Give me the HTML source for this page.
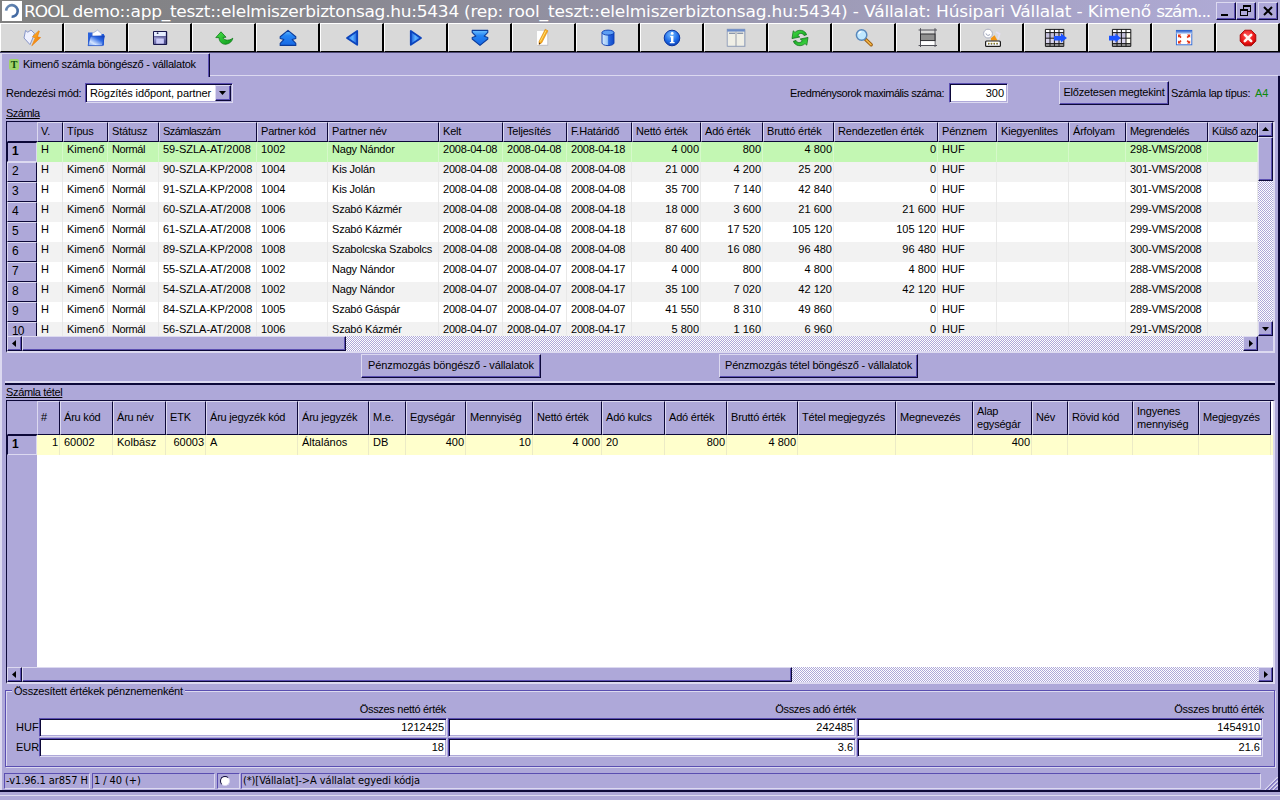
<!DOCTYPE html>
<html><head><meta charset="utf-8"><title>ROOL demo</title>
<style>
*{box-sizing:border-box;margin:0;padding:0}
html,body{width:1280px;height:800px;overflow:hidden}
body{background:#aea8d9;font-family:"Liberation Sans",sans-serif;font-size:11px;color:#000;position:relative}
.a{position:absolute;white-space:nowrap}
.t{position:absolute;white-space:nowrap;line-height:13px;height:13px}
.r{text-align:right}
.title{left:0;top:0;width:1280px;height:23px;background:linear-gradient(to right,#808080 0,#85858a 20%,#b1acd9 100%)}
.title .tx{left:24px;top:0;height:23px;line-height:22px;font-family:"DejaVu Sans","Liberation Sans",sans-serif;font-size:17px;color:#fff;letter-spacing:-0.27px;transform:scaleY(.945);transform-origin:0 16.9px}
.tb{top:23px;width:64px;height:29px;background:#d9d9d9;border-top:1px solid #fff;border-left:1px solid #fff;border-right:2px solid #000;border-bottom:1px solid #000;box-shadow:0 1px 0 #4a4670}
.raised{border:1px solid;border-color:#dcd9f0 #0c0838 #0c0838 #dcd9f0;background:#aea8d9}
.btn{border:1px solid;border-color:#dcd9f0 #0c0838 #0c0838 #dcd9f0;box-shadow:inset -1px -1px 0 #5a4eb1;background:#aea8d9;text-align:center}
.sunk{border:1px solid;border-color:#5a4eb1 #dcd9f0 #dcd9f0 #5a4eb1;box-shadow:inset 1px 1px 0 #0c0838,inset -1px -1px 0 #aea8d9;padding:1px;background:#fff}
.hc{top:0;border:1px solid;border-color:#dcd9f0 #0c0838 #0c0838 #dcd9f0;background:#aea8d9;padding-left:3px;overflow:hidden;letter-spacing:-0.2px}
.rh{left:0;width:30px;height:20px;border:1px solid;border-color:#dcd9f0 #0c0838 #0c0838 #dcd9f0;background:#aea8d9;padding-left:4px;font-size:12px;line-height:17px;letter-spacing:-1px}
.row{left:30px;height:20px}
.c{top:0;height:20px;line-height:14px;padding:0 1px 0 4px;border-right:1px solid #e8e8e8;overflow:hidden}
.dith{background-image:conic-gradient(#fff 25%,#aea8d9 0 50%,#fff 0 75%,#aea8d9 0);background-size:2px 2px}
.sb{border:1px solid;border-color:#dcd9f0 #0c0838 #0c0838 #dcd9f0;box-shadow:inset -1px -1px 0 #5a4eb1;background:#aea8d9}
.u{text-decoration:underline}
</style></head><body>

<div class="a title"><div class="a" style="left:2px;top:1px;width:20px;height:20px;background:#fff"><svg width="20" height="20" viewBox="0 0 20 20"><defs><linearGradient id="gsw" x1="0" y1="0" x2="1" y2="1"><stop offset="0" stop-color="#6c8cb4"/><stop offset="1" stop-color="#3c64a0"/></linearGradient></defs><path d="M4.1 9.6 A5.8 5.8 0 1 1 9.6 15.7" fill="none" stroke="url(#gsw)" stroke-width="2.6"/></svg></div>
<div class="a tx"><span style="letter-spacing:-1px">ROOL </span>demo::app_teszt::elelmiszerbiztonsag.hu:5434 (rep: <span style="letter-spacing:-0.15px">rool_teszt::elelmiszerbiztonsag.hu:5434) - Vállalat: Húsipari Vállalat - Kimenő </span><span style="letter-spacing:-1px">szám...</span></div>
<div class="a btn" style="left:1216px;top:2px;width:20px;height:18px">
<div class="a" style="left:4px;top:11px;width:7px;height:2px;background:#000"></div>
</div>
<div class="a btn" style="left:1236px;top:2px;width:20px;height:18px">
<div class="a" style="left:6px;top:2px;width:8px;height:7px;border:1px solid #000;border-top-width:2px"></div><div class="a" style="left:3px;top:6px;width:8px;height:7px;border:1px solid #000;border-top-width:2px;background:#aea8d9"></div>
</div>
<div class="a btn" style="left:1258px;top:2px;width:20px;height:18px">
<svg class="a" style="left:4px;top:3px" width="10" height="10" viewBox="0 0 10 10"><path d="M1 1 L9 9 M9 1 L1 9" stroke="#000" stroke-width="2"/></svg>
</div>
</div>
<svg width="0" height="0" style="position:absolute"><defs>
<linearGradient id="gbv" x1="0" y1="0" x2="0" y2="1"><stop offset="0" stop-color="#6cc0ff"/><stop offset=".35" stop-color="#2484f4"/><stop offset="1" stop-color="#1668e4"/></linearGradient>
<linearGradient id="gbh" x1="0" y1="0" x2="1" y2="0"><stop offset="0" stop-color="#2c80f0"/><stop offset=".55" stop-color="#5cb0ff"/><stop offset="1" stop-color="#1458d8"/></linearGradient>
<linearGradient id="gbh2" x1="0" y1="0" x2="1" y2="0"><stop offset="0" stop-color="#1458d8"/><stop offset=".45" stop-color="#5cb0ff"/><stop offset="1" stop-color="#2c80f0"/></linearGradient>
<linearGradient id="gcyl" x1="0" y1="0" x2="1" y2="0"><stop offset="0" stop-color="#d8ecff"/><stop offset=".45" stop-color="#9cc8f8"/><stop offset=".55" stop-color="#2a6ae0"/><stop offset="1" stop-color="#0f48c8"/></linearGradient>
<linearGradient id="gfl" x1="1" y1="0" x2="0" y2="1"><stop offset="0" stop-color="#0c38b8"/><stop offset=".35" stop-color="#2e6ae4"/><stop offset=".72" stop-color="#d4e4ff"/><stop offset="1" stop-color="#6c9cf0"/></linearGradient>
<linearGradient id="gor" x1="0" y1="0" x2="1" y2="1"><stop offset="0" stop-color="#ffc030"/><stop offset="1" stop-color="#f06800"/></linearGradient>
<linearGradient id="gfd" x1="0" y1="0" x2="0.4" y2="1"><stop offset="0" stop-color="#d8dcf8"/><stop offset=".5" stop-color="#9c9cd0"/><stop offset="1" stop-color="#50508c"/></linearGradient>
<radialGradient id="ginf" cx=".45" cy=".3" r=".75"><stop offset="0" stop-color="#7cc0ff"/><stop offset=".6" stop-color="#1c6ae8"/><stop offset="1" stop-color="#0838a8"/></radialGradient>
<radialGradient id="gred" cx=".45" cy=".35" r=".7"><stop offset="0" stop-color="#ff5a5a"/><stop offset=".7" stop-color="#e81010"/><stop offset="1" stop-color="#b00000"/></radialGradient>
<linearGradient id="ggr" x1="0" y1="0" x2="1" y2="1"><stop offset="0" stop-color="#48e048"/><stop offset="1" stop-color="#0c9a1c"/></linearGradient>
<linearGradient id="gtb" x1="0" y1="0" x2="0" y2="1"><stop offset="0" stop-color="#1c54c8"/><stop offset="1" stop-color="#bcd4f8"/></linearGradient>
</defs></svg>
<div class="a tb" style="left:0px"><svg class="a" style="left:-1px;top:-2px" width="64" height="31" viewBox="0 0 64 31"><path d="M24 16 L25.5 8.5 L27.8 10.2 L31 8 L34.4 11.4 L33 15.5 L30 22.6 Z" fill="#eef0ff" stroke="#7c8cc4" stroke-width=".9" stroke-linejoin="round"/><path d="M38.8 8.8 L32.4 14.8 L35.4 15.8 L31.8 23.8 L40.6 15.6 L37.4 14.8 L39.4 9.2 Z" fill="url(#gor)" stroke="#e87800" stroke-width=".6" stroke-linejoin="round"/></svg></div>
<div class="a tb" style="left:64px"><svg class="a" style="left:-1px;top:-2px" width="64" height="31" viewBox="0 0 64 31"><path d="M24 10.5 h4.5 l1 1.5 h10.5 v11.5 h-16 z" fill="#2a62dc"/><path d="M28.4 14.4 V11.4 L33.6 8.2 L37.4 11.6 V14.4 Z" fill="#fff" stroke="#94a8dc" stroke-width=".7" stroke-linejoin="round"/><path d="M26.5 14.2 L40.6 13.8 L38.4 23.6 L24 23.6 Z" fill="url(#gfl)" stroke="#1444c0" stroke-width=".6" stroke-linejoin="round"/></svg></div>
<div class="a tb" style="left:128px"><svg class="a" style="left:-1px;top:-2px" width="64" height="31" viewBox="0 0 64 31"><rect x="25" y="9" width="14.2" height="14" rx="1" fill="#16164a"/><rect x="26" y="10" width="12" height="12" fill="url(#gfd)"/><rect x="26.2" y="10" width="11.4" height="4" fill="#e6eeff"/><circle cx="29.6" cy="11.2" r=".9" fill="#30305c"/><rect x="26" y="14.3" width="12" height="1" fill="#50508c"/><rect x="28" y="16.6" width="8" height="5" fill="#b8b8f0"/><path d="M30 16.6v5M32 16.6v5M34 16.6v5" stroke="#e8e8ff" stroke-width=".8"/></svg></div>
<div class="a tb" style="left:192px"><svg class="a" style="left:-1px;top:-2px" width="64" height="31" viewBox="0 0 64 31"><path d="M29 9.8 L23.8 15.6 L27 15.6 C27.2 20.2 30.6 22.6 34 22.2 C37.6 21.8 40 19.6 40.8 16.2 C38.6 18 36 18.4 34.2 18 C32.4 17.6 31.2 16.8 31.2 15.4 L34 15.2 Z" fill="url(#ggr)" stroke="#0a7a14" stroke-width=".8" stroke-linejoin="round"/></svg></div>
<div class="a tb" style="left:256px"><svg class="a" style="left:-1px;top:-2px" width="64" height="31" viewBox="0 0 64 31"><path d="M32 8.4 L39.8 14.8 V16.4 L36.2 17.6 L39.8 21.4 V23.4 H24.2 V21.4 L27.8 17.6 L24.2 16.4 V14.8 Z" fill="url(#gbv)" stroke="#0a3c9c" stroke-width="1.1" stroke-linejoin="round"/></svg></div>
<div class="a tb" style="left:320px"><svg class="a" style="left:-1px;top:-2px" width="64" height="31" viewBox="0 0 64 31"><path d="M27 16 L37.2 9 V22.8 Z" fill="url(#gbh)" stroke="#0c44bc" stroke-width="1.8" stroke-linejoin="round"/></svg></div>
<div class="a tb" style="left:384px"><svg class="a" style="left:-1px;top:-2px" width="64" height="31" viewBox="0 0 64 31"><path d="M37 16 L26.8 9 V22.8 Z" fill="url(#gbh2)" stroke="#0c44bc" stroke-width="1.8" stroke-linejoin="round"/></svg></div>
<div class="a tb" style="left:448px"><svg class="a" style="left:-1px;top:-2px" width="64" height="31" viewBox="0 0 64 31"><path d="M32 23.4 L24.2 17 V15.4 L27.8 14.2 L24.2 10.4 V8.4 H39.8 V10.4 L36.2 14.2 L39.8 15.4 V17 Z" fill="url(#gbv)" stroke="#0a3c9c" stroke-width="1.1" stroke-linejoin="round"/></svg></div>
<div class="a tb" style="left:512px"><svg class="a" style="left:-1px;top:-2px" width="64" height="31" viewBox="0 0 64 31"><rect x="25.6" y="9.6" width="10.6" height="14" fill="#b8b8c0"/><rect x="25" y="9" width="10.4" height="13.8" fill="#fff"/><path d="M33.2 7.2 L36 8.8 L29.8 20.8 L27 22.4 L27 19.4 Z" fill="#f4a820" stroke="#d88000" stroke-width=".5" stroke-linejoin="round"/><path d="M34 8.6 L28.2 19.6" stroke="#ffe070" stroke-width="1"/><path d="M27 20.4 L28.6 21.4 L27 22.4 Z" fill="#40281c"/></svg></div>
<div class="a tb" style="left:576px"><svg class="a" style="left:-1px;top:-2px" width="64" height="31" viewBox="0 0 64 31"><path d="M26 10.6 V21 A6 2.6 0 0 0 38 21 V10.6 Z" fill="url(#gcyl)" stroke="#0c3cb0" stroke-width=".9"/><ellipse cx="32" cy="10.6" rx="6" ry="2.5" fill="#5c9ef4" stroke="#0c3cb0" stroke-width=".9"/></svg></div>
<div class="a tb" style="left:640px"><svg class="a" style="left:-1px;top:-2px" width="64" height="31" viewBox="0 0 64 31"><circle cx="32" cy="16" r="7.8" fill="url(#ginf)" stroke="#0a34a0" stroke-width="1"/><circle cx="32.2" cy="11.4" r="1.4" fill="#fff"/><path d="M30.2 14 H33.4 V20 H34.6 V21.2 H29.8 V20 H31 V15.2 H30.2 Z" fill="#fff"/></svg></div>
<div class="a tb" style="left:704px"><svg class="a" style="left:-1px;top:-2px" width="64" height="31" viewBox="0 0 64 31"><rect x="23.8" y="7.8" width="17.6" height="17" fill="#b4b8c4"/><rect x="23.2" y="7.2" width="17.6" height="17" fill="#f0efe6" stroke="#8494b4" stroke-width=".8"/><rect x="23.2" y="7.2" width="17.6" height="2.4" fill="#6c8cc8"/><rect x="25" y="10.6" width="6" height="1.4" fill="#8c98ac"/><rect x="33.2" y="10.6" width="6" height="1.4" fill="#8c98ac"/><path d="M32 9.6 V24.2" stroke="#8c94a4" stroke-width=".9"/></svg></div>
<div class="a tb" style="left:768px"><svg class="a" style="left:-1px;top:-2px" width="64" height="31" viewBox="0 0 64 31"><path d="M38.6 12.8 C37.4 8 30.4 6.8 27 10.4 L25.2 8.8 L24 16.6 L31.8 15 L29.8 13.2 C31.6 10.6 35 11 36 13.6 Z" fill="url(#ggr)" stroke="#0c6c18" stroke-width=".7" stroke-linejoin="round"/><path d="M38.6 12.8 C37.4 8 30.4 6.8 27 10.4 L25.2 8.8 L24 16.6 L31.8 15 L29.8 13.2 C31.6 10.6 35 11 36 13.6 Z" fill="url(#ggr)" stroke="#0c6c18" stroke-width=".7" stroke-linejoin="round" transform="rotate(180 32 16)"/></svg></div>
<div class="a tb" style="left:832px"><svg class="a" style="left:-1px;top:-2px" width="64" height="31" viewBox="0 0 64 31"><path d="M33.4 17.2 L39.2 22.8" stroke="#9c5c10" stroke-width="3.4" stroke-linecap="round"/><path d="M34.2 18 L39 22.6" stroke="#f4b848" stroke-width="1.6" stroke-linecap="round"/><circle cx="29.6" cy="13" r="5.2" fill="#c0e8ff" stroke="#5888bc" stroke-width="1.5"/><path d="M26.6 12 A3.4 3.4 0 0 1 29.4 9.6" stroke="#fff" stroke-width="1.1" fill="none"/></svg></div>
<div class="a tb" style="left:896px"><svg class="a" style="left:-1px;top:-2px" width="64" height="31" viewBox="0 0 64 31"><path d="M22.6 8H41M22.6 23.5H41M24.5 6.2V25M39 6.2V25" stroke="#505058" stroke-width="1"/><rect x="24.5" y="12" width="14.5" height="6.6" fill="#909090" stroke="#2c2c30" stroke-width="1"/><rect x="25" y="19.2" width="13.5" height="3.8" fill="#fff"/></svg></div>
<div class="a tb" style="left:960px"><svg class="a" style="left:-1px;top:-2px" width="64" height="31" viewBox="0 0 64 31"><circle cx="28" cy="11.6" r="4.4" fill="#fff" stroke="#a4a8bc" stroke-width=".9"/><path d="M26 11.4 A2.2 2.2 0 0 0 30 12.4" stroke="#9098b0" stroke-width=".9" fill="none"/><path d="M30.8 16.2 L34.6 13.2 L37.4 18.6 H31 Z" fill="#f49410"/><path d="M36 10 L39.6 12 L38 17" stroke="#e4e0f4" stroke-width="1.6" fill="none"/><rect x="25.6" y="19" width="14.8" height="5.4" rx="1" fill="#fff" stroke="#1c1c1c" stroke-width="1.2"/><path d="M28 21.8h1.4M30.8 21.8h1.4M33.6 21.8h1.4M36.4 21.8h1.4" stroke="#30302c" stroke-width="1.6"/><path d="M28 21.2h1.4M30.8 21.2h1.4M33.6 21.2h1.4M36.4 21.2h1.4" stroke="#d8c020" stroke-width=".8"/></svg></div>
<div class="a tb" style="left:1024px"><svg class="a" style="left:-1px;top:-2px" width="64" height="31" viewBox="0 0 64 31"><rect x="21.4" y="7.4" width="18.4" height="17" fill="#c4c0dc"/><rect x="21.4" y="7.4" width="18.4" height="3" fill="#fff"/><rect x="21.4" y="16.4" width="18.4" height="5" fill="#d8d4ec"/><rect x="21.4" y="21.6" width="18.4" height="2.6" fill="#989898"/><path d="M21.4 7.4V24.4M26.0 7.4V24.4M30.4 7.4V24.4M35.0 7.4V24.4M39.8 7.4V24.4M21.4 7.4H39.8M21.4 10.6H39.8M21.4 16.2H39.8M21.4 21.6H39.8M21.4 24.4H39.8" stroke="#181818" stroke-width="1"/><path d="M30 14 H37 V11.6 L43 16 L37 20.6 V18.4 H30 Z" fill="#1c54ff"/></svg></div>
<div class="a tb" style="left:1088px"><svg class="a" style="left:-1px;top:-2px" width="64" height="31" viewBox="0 0 64 31"><rect x="24.4" y="7.4" width="18.4" height="17" fill="#c4c0dc"/><rect x="24.4" y="7.4" width="18.4" height="3" fill="#fff"/><rect x="24.4" y="16.4" width="18.4" height="5" fill="#d8d4ec"/><rect x="24.4" y="21.6" width="18.4" height="2.6" fill="#989898"/><rect x="38.0" y="10.4" width="4.8" height="11.2" fill="#fffff4"/><path d="M24.4 7.4V24.4M29.0 7.4V24.4M33.4 7.4V24.4M38.0 7.4V24.4M42.8 7.4V24.4M24.4 7.4H42.8M24.4 10.6H42.8M24.4 16.2H42.8M24.4 21.6H42.8M24.4 24.4H42.8" stroke="#181818" stroke-width="1"/><path d="M21 13.8 H27.4 V11.6 L32.6 16 L27.4 20.6 V18.6 H21 Z" fill="#1c54ff"/></svg></div>
<div class="a tb" style="left:1152px"><svg class="a" style="left:-1px;top:-2px" width="64" height="31" viewBox="0 0 64 31"><rect x="24.4" y="8.4" width="15.4" height="14.4" fill="#fff" stroke="#2c68d8" stroke-width=".9"/><rect x="24.4" y="8.4" width="15.4" height="3.4" fill="url(#gtb)"/><path d="M26 12.6h3.2l-1 1 1.4 1.4-1.2 1.2-1.4-1.4-1 1zM38.2 12.6v3.2l-1-1-1.4 1.4-1.2-1.2 1.4-1.4-1-1zM26 21.6v-3.2l1 1 1.4-1.4 1.2 1.2-1.4 1.4 1 1zM38.2 21.6h-3.2l1-1-1.4-1.4 1.2-1.2 1.4 1.4 1-1z" fill="#e43414"/></svg></div>
<div class="a tb" style="left:1216px"><svg class="a" style="left:-1px;top:-2px" width="64" height="31" viewBox="0 0 64 31"><path d="M28.8 8.2 H35.2 L39.8 12.8 V19.2 L35.2 23.8 H28.8 L24.2 19.2 V12.8 Z" fill="url(#gred)" stroke="#a40404" stroke-width=".9" stroke-linejoin="round"/><path d="M28.8 12.8 L35.2 19.2 M35.2 12.8 L28.8 19.2" stroke="#fff4f0" stroke-width="2.6" stroke-linecap="round"/></svg></div>
<div class="a" style="left:1px;top:53px;width:209px;height:24px;border-top:1px solid #dcd9f0;border-right:1px solid #0c0838;box-shadow:inset -1px 0 0 #5a4eb1;background:#aea8d9"></div>
<div class="a" style="left:210px;top:75px;width:1068px;height:1px;background:#dcd9f0"></div>
<div class="a" style="left:9px;top:59px;width:10px;height:11px;background:#9fd36a;border-radius:2px;font:bold 10px 'Liberation Serif',serif;line-height:11px;text-align:center;color:#0a4a0a">T</div>
<div class="t" style="left:23px;top:58px;letter-spacing:-0.25px">Kimenő számla böngésző - vállalatok</div>
<div class="t" style="left:6px;top:87px;letter-spacing:-0.3px">Rendezési mód:</div>
<div class="a sunk" style="left:85px;top:83px;width:148px;height:20px"><div class="t" style="left:4px;top:3px;letter-spacing:-0.1px">Rögzítés időpont, partner</div><div class="a btn" style="right:1px;top:1px;width:16px;height:16px"><svg class="a" style="left:3px;top:5px" width="7" height="4"><path d="M0 0h7L3.5 4z" fill="#000"/></svg></div></div>
<div class="t" style="left:790px;top:87px;letter-spacing:-0.45px">Eredménysorok maximális száma:</div>
<div class="a sunk" style="left:949px;top:83px;width:59px;height:20px"><div class="t r" style="right:3px;top:3px">300</div></div>
<div class="a btn" style="left:1059px;top:81px;width:110px;height:24px;line-height:21px;letter-spacing:-0.2px">Előzetesen megtekint</div>
<div class="t" style="left:1171px;top:87px;letter-spacing:-0.3px">Számla lap típus:</div>
<div class="t" style="left:1255px;top:87px;color:#0a8a0a">A4</div>
<div class="t u" style="left:6px;top:107px;letter-spacing:-0.5px">Számla</div>
<div class="a" style="left:6px;top:121px;width:1269px;height:232px;border-width:1px 2px 2px 1px;border-style:solid;border-color:#0c0838;border-right-color:#dcd9f0;border-bottom-color:#dcd9f0;background:#fff;overflow:hidden">
<div class="a" style="left:0;top:0;width:1251px;height:214px;overflow:hidden">
<div class="a hc" style="left:0;width:31px;height:20px;border-color:#aea8d9 #aea8d9 #0c0838 #aea8d9;border-right-width:0"></div>
<div class="a hc" style="left:30px;width:26px;height:20px;line-height:17px">V.</div>
<div class="a hc" style="left:56px;width:45px;height:20px;line-height:17px">Típus</div>
<div class="a hc" style="left:101px;width:51px;height:20px;line-height:17px">Státusz</div>
<div class="a hc" style="left:152px;width:98px;height:20px;line-height:17px;letter-spacing:-0.55px">Számlaszám</div>
<div class="a hc" style="left:250px;width:71px;height:20px;line-height:17px">Partner kód</div>
<div class="a hc" style="left:321px;width:111px;height:20px;line-height:17px">Partner név</div>
<div class="a hc" style="left:432px;width:64px;height:20px;line-height:17px">Kelt</div>
<div class="a hc" style="left:496px;width:64px;height:20px;line-height:17px">Teljesítés</div>
<div class="a hc" style="left:560px;width:65px;height:20px;line-height:17px">F.Határidő</div>
<div class="a hc" style="left:625px;width:69px;height:20px;line-height:17px">Nettó érték</div>
<div class="a hc" style="left:694px;width:62px;height:20px;line-height:17px">Adó érték</div>
<div class="a hc" style="left:756px;width:71px;height:20px;line-height:17px">Bruttó érték</div>
<div class="a hc" style="left:827px;width:104px;height:20px;line-height:17px">Rendezetlen érték</div>
<div class="a hc" style="left:931px;width:59px;height:20px;line-height:17px">Pénznem</div>
<div class="a hc" style="left:990px;width:72px;height:20px;line-height:17px">Kiegyenlites</div>
<div class="a hc" style="left:1062px;width:57px;height:20px;line-height:17px">Árfolyam</div>
<div class="a hc" style="left:1119px;width:82px;height:20px;line-height:17px;letter-spacing:-0.4px">Megrendelés</div>
<div class="a hc" style="left:1201px;width:50px;height:20px;line-height:17px;letter-spacing:-0.4px">Külső azo</div>
<div class="a rh" style="top:20px;font-weight:bold;border-color:#0c0838 #dcd9f0 #dcd9f0 #0c0838">1</div>
<div class="a row" style="top:20px;width:1221px;background:#c3f7b3">
<div class="a c" style="left:0px;width:26px;border-right-color:#d6f9ca">H</div>
<div class="a c" style="left:26px;width:45px;border-right-color:#d6f9ca">Kimenő</div>
<div class="a c" style="left:71px;width:51px;letter-spacing:-0.4px;border-right-color:#d6f9ca">Normál</div>
<div class="a c" style="left:122px;width:98px;border-right-color:#d6f9ca">59-SZLA-AT/2008</div>
<div class="a c" style="left:220px;width:71px;border-right-color:#d6f9ca">1002</div>
<div class="a c" style="left:291px;width:111px;letter-spacing:-0.2px;border-right-color:#d6f9ca">Nagy Nándor</div>
<div class="a c" style="left:402px;width:64px;letter-spacing:-0.2px;border-right-color:#d6f9ca">2008-04-08</div>
<div class="a c" style="left:466px;width:64px;letter-spacing:-0.2px;border-right-color:#d6f9ca">2008-04-08</div>
<div class="a c" style="left:530px;width:65px;letter-spacing:-0.2px;border-right-color:#d6f9ca">2008-04-18</div>
<div class="a c r" style="left:595px;width:69px;border-right-color:#d6f9ca">4 000</div>
<div class="a c r" style="left:664px;width:62px;border-right-color:#d6f9ca">800</div>
<div class="a c r" style="left:726px;width:71px;border-right-color:#d6f9ca">4 800</div>
<div class="a c r" style="left:797px;width:104px;border-right-color:#d6f9ca">0</div>
<div class="a c" style="left:901px;width:59px;border-right-color:#d6f9ca">HUF</div>
<div class="a c" style="left:960px;width:72px;border-right-color:#d6f9ca"></div>
<div class="a c" style="left:1032px;width:57px;border-right-color:#d6f9ca"></div>
<div class="a c" style="left:1089px;width:82px;letter-spacing:-0.15px;border-right-color:#d6f9ca">298-VMS/2008</div>
<div class="a c" style="left:1171px;width:50px;border-right-color:#d6f9ca"></div>
</div>
<div class="a rh" style="top:40px">2</div>
<div class="a row" style="top:40px;width:1221px;background:#f2f2f2">
<div class="a c" style="left:0px;width:26px">H</div>
<div class="a c" style="left:26px;width:45px">Kimenő</div>
<div class="a c" style="left:71px;width:51px;letter-spacing:-0.4px">Normál</div>
<div class="a c" style="left:122px;width:98px">90-SZLA-KP/2008</div>
<div class="a c" style="left:220px;width:71px">1004</div>
<div class="a c" style="left:291px;width:111px;letter-spacing:-0.2px">Kis Jolán</div>
<div class="a c" style="left:402px;width:64px;letter-spacing:-0.2px">2008-04-08</div>
<div class="a c" style="left:466px;width:64px;letter-spacing:-0.2px">2008-04-08</div>
<div class="a c" style="left:530px;width:65px;letter-spacing:-0.2px">2008-04-08</div>
<div class="a c r" style="left:595px;width:69px">21 000</div>
<div class="a c r" style="left:664px;width:62px">4 200</div>
<div class="a c r" style="left:726px;width:71px">25 200</div>
<div class="a c r" style="left:797px;width:104px">0</div>
<div class="a c" style="left:901px;width:59px">HUF</div>
<div class="a c" style="left:960px;width:72px"></div>
<div class="a c" style="left:1032px;width:57px"></div>
<div class="a c" style="left:1089px;width:82px;letter-spacing:-0.15px">301-VMS/2008</div>
<div class="a c" style="left:1171px;width:50px"></div>
</div>
<div class="a rh" style="top:60px">3</div>
<div class="a row" style="top:60px;width:1221px;background:#fff">
<div class="a c" style="left:0px;width:26px">H</div>
<div class="a c" style="left:26px;width:45px">Kimenő</div>
<div class="a c" style="left:71px;width:51px;letter-spacing:-0.4px">Normál</div>
<div class="a c" style="left:122px;width:98px">91-SZLA-KP/2008</div>
<div class="a c" style="left:220px;width:71px">1004</div>
<div class="a c" style="left:291px;width:111px;letter-spacing:-0.2px">Kis Jolán</div>
<div class="a c" style="left:402px;width:64px;letter-spacing:-0.2px">2008-04-08</div>
<div class="a c" style="left:466px;width:64px;letter-spacing:-0.2px">2008-04-08</div>
<div class="a c" style="left:530px;width:65px;letter-spacing:-0.2px">2008-04-08</div>
<div class="a c r" style="left:595px;width:69px">35 700</div>
<div class="a c r" style="left:664px;width:62px">7 140</div>
<div class="a c r" style="left:726px;width:71px">42 840</div>
<div class="a c r" style="left:797px;width:104px">0</div>
<div class="a c" style="left:901px;width:59px">HUF</div>
<div class="a c" style="left:960px;width:72px"></div>
<div class="a c" style="left:1032px;width:57px"></div>
<div class="a c" style="left:1089px;width:82px;letter-spacing:-0.15px">301-VMS/2008</div>
<div class="a c" style="left:1171px;width:50px"></div>
</div>
<div class="a rh" style="top:80px">4</div>
<div class="a row" style="top:80px;width:1221px;background:#f2f2f2">
<div class="a c" style="left:0px;width:26px">H</div>
<div class="a c" style="left:26px;width:45px">Kimenő</div>
<div class="a c" style="left:71px;width:51px;letter-spacing:-0.4px">Normál</div>
<div class="a c" style="left:122px;width:98px">60-SZLA-AT/2008</div>
<div class="a c" style="left:220px;width:71px">1006</div>
<div class="a c" style="left:291px;width:111px;letter-spacing:-0.2px">Szabó Kázmér</div>
<div class="a c" style="left:402px;width:64px;letter-spacing:-0.2px">2008-04-08</div>
<div class="a c" style="left:466px;width:64px;letter-spacing:-0.2px">2008-04-08</div>
<div class="a c" style="left:530px;width:65px;letter-spacing:-0.2px">2008-04-18</div>
<div class="a c r" style="left:595px;width:69px">18 000</div>
<div class="a c r" style="left:664px;width:62px">3 600</div>
<div class="a c r" style="left:726px;width:71px">21 600</div>
<div class="a c r" style="left:797px;width:104px">21 600</div>
<div class="a c" style="left:901px;width:59px">HUF</div>
<div class="a c" style="left:960px;width:72px"></div>
<div class="a c" style="left:1032px;width:57px"></div>
<div class="a c" style="left:1089px;width:82px;letter-spacing:-0.15px">299-VMS/2008</div>
<div class="a c" style="left:1171px;width:50px"></div>
</div>
<div class="a rh" style="top:100px">5</div>
<div class="a row" style="top:100px;width:1221px;background:#fff">
<div class="a c" style="left:0px;width:26px">H</div>
<div class="a c" style="left:26px;width:45px">Kimenő</div>
<div class="a c" style="left:71px;width:51px;letter-spacing:-0.4px">Normál</div>
<div class="a c" style="left:122px;width:98px">61-SZLA-AT/2008</div>
<div class="a c" style="left:220px;width:71px">1006</div>
<div class="a c" style="left:291px;width:111px;letter-spacing:-0.2px">Szabó Kázmér</div>
<div class="a c" style="left:402px;width:64px;letter-spacing:-0.2px">2008-04-08</div>
<div class="a c" style="left:466px;width:64px;letter-spacing:-0.2px">2008-04-08</div>
<div class="a c" style="left:530px;width:65px;letter-spacing:-0.2px">2008-04-18</div>
<div class="a c r" style="left:595px;width:69px">87 600</div>
<div class="a c r" style="left:664px;width:62px">17 520</div>
<div class="a c r" style="left:726px;width:71px">105 120</div>
<div class="a c r" style="left:797px;width:104px">105 120</div>
<div class="a c" style="left:901px;width:59px">HUF</div>
<div class="a c" style="left:960px;width:72px"></div>
<div class="a c" style="left:1032px;width:57px"></div>
<div class="a c" style="left:1089px;width:82px;letter-spacing:-0.15px">299-VMS/2008</div>
<div class="a c" style="left:1171px;width:50px"></div>
</div>
<div class="a rh" style="top:120px">6</div>
<div class="a row" style="top:120px;width:1221px;background:#f2f2f2">
<div class="a c" style="left:0px;width:26px">H</div>
<div class="a c" style="left:26px;width:45px">Kimenő</div>
<div class="a c" style="left:71px;width:51px;letter-spacing:-0.4px">Normál</div>
<div class="a c" style="left:122px;width:98px">89-SZLA-KP/2008</div>
<div class="a c" style="left:220px;width:71px">1008</div>
<div class="a c" style="left:291px;width:111px;letter-spacing:-0.2px">Szabolcska Szabolcs</div>
<div class="a c" style="left:402px;width:64px;letter-spacing:-0.2px">2008-04-08</div>
<div class="a c" style="left:466px;width:64px;letter-spacing:-0.2px">2008-04-08</div>
<div class="a c" style="left:530px;width:65px;letter-spacing:-0.2px">2008-04-08</div>
<div class="a c r" style="left:595px;width:69px">80 400</div>
<div class="a c r" style="left:664px;width:62px">16 080</div>
<div class="a c r" style="left:726px;width:71px">96 480</div>
<div class="a c r" style="left:797px;width:104px">96 480</div>
<div class="a c" style="left:901px;width:59px">HUF</div>
<div class="a c" style="left:960px;width:72px"></div>
<div class="a c" style="left:1032px;width:57px"></div>
<div class="a c" style="left:1089px;width:82px;letter-spacing:-0.15px">300-VMS/2008</div>
<div class="a c" style="left:1171px;width:50px"></div>
</div>
<div class="a rh" style="top:140px">7</div>
<div class="a row" style="top:140px;width:1221px;background:#fff">
<div class="a c" style="left:0px;width:26px">H</div>
<div class="a c" style="left:26px;width:45px">Kimenő</div>
<div class="a c" style="left:71px;width:51px;letter-spacing:-0.4px">Normál</div>
<div class="a c" style="left:122px;width:98px">55-SZLA-AT/2008</div>
<div class="a c" style="left:220px;width:71px">1002</div>
<div class="a c" style="left:291px;width:111px;letter-spacing:-0.2px">Nagy Nándor</div>
<div class="a c" style="left:402px;width:64px;letter-spacing:-0.2px">2008-04-07</div>
<div class="a c" style="left:466px;width:64px;letter-spacing:-0.2px">2008-04-07</div>
<div class="a c" style="left:530px;width:65px;letter-spacing:-0.2px">2008-04-17</div>
<div class="a c r" style="left:595px;width:69px">4 000</div>
<div class="a c r" style="left:664px;width:62px">800</div>
<div class="a c r" style="left:726px;width:71px">4 800</div>
<div class="a c r" style="left:797px;width:104px">4 800</div>
<div class="a c" style="left:901px;width:59px">HUF</div>
<div class="a c" style="left:960px;width:72px"></div>
<div class="a c" style="left:1032px;width:57px"></div>
<div class="a c" style="left:1089px;width:82px;letter-spacing:-0.15px">288-VMS/2008</div>
<div class="a c" style="left:1171px;width:50px"></div>
</div>
<div class="a rh" style="top:160px">8</div>
<div class="a row" style="top:160px;width:1221px;background:#f2f2f2">
<div class="a c" style="left:0px;width:26px">H</div>
<div class="a c" style="left:26px;width:45px">Kimenő</div>
<div class="a c" style="left:71px;width:51px;letter-spacing:-0.4px">Normál</div>
<div class="a c" style="left:122px;width:98px">54-SZLA-AT/2008</div>
<div class="a c" style="left:220px;width:71px">1002</div>
<div class="a c" style="left:291px;width:111px;letter-spacing:-0.2px">Nagy Nándor</div>
<div class="a c" style="left:402px;width:64px;letter-spacing:-0.2px">2008-04-07</div>
<div class="a c" style="left:466px;width:64px;letter-spacing:-0.2px">2008-04-07</div>
<div class="a c" style="left:530px;width:65px;letter-spacing:-0.2px">2008-04-17</div>
<div class="a c r" style="left:595px;width:69px">35 100</div>
<div class="a c r" style="left:664px;width:62px">7 020</div>
<div class="a c r" style="left:726px;width:71px">42 120</div>
<div class="a c r" style="left:797px;width:104px">42 120</div>
<div class="a c" style="left:901px;width:59px">HUF</div>
<div class="a c" style="left:960px;width:72px"></div>
<div class="a c" style="left:1032px;width:57px"></div>
<div class="a c" style="left:1089px;width:82px;letter-spacing:-0.15px">288-VMS/2008</div>
<div class="a c" style="left:1171px;width:50px"></div>
</div>
<div class="a rh" style="top:180px">9</div>
<div class="a row" style="top:180px;width:1221px;background:#fff">
<div class="a c" style="left:0px;width:26px">H</div>
<div class="a c" style="left:26px;width:45px">Kimenő</div>
<div class="a c" style="left:71px;width:51px;letter-spacing:-0.4px">Normál</div>
<div class="a c" style="left:122px;width:98px">84-SZLA-KP/2008</div>
<div class="a c" style="left:220px;width:71px">1005</div>
<div class="a c" style="left:291px;width:111px;letter-spacing:-0.2px">Szabó Gáspár</div>
<div class="a c" style="left:402px;width:64px;letter-spacing:-0.2px">2008-04-07</div>
<div class="a c" style="left:466px;width:64px;letter-spacing:-0.2px">2008-04-07</div>
<div class="a c" style="left:530px;width:65px;letter-spacing:-0.2px">2008-04-07</div>
<div class="a c r" style="left:595px;width:69px">41 550</div>
<div class="a c r" style="left:664px;width:62px">8 310</div>
<div class="a c r" style="left:726px;width:71px">49 860</div>
<div class="a c r" style="left:797px;width:104px">0</div>
<div class="a c" style="left:901px;width:59px">HUF</div>
<div class="a c" style="left:960px;width:72px"></div>
<div class="a c" style="left:1032px;width:57px"></div>
<div class="a c" style="left:1089px;width:82px;letter-spacing:-0.15px">289-VMS/2008</div>
<div class="a c" style="left:1171px;width:50px"></div>
</div>
<div class="a rh" style="top:200px">10</div>
<div class="a row" style="top:200px;width:1221px;background:#f2f2f2">
<div class="a c" style="left:0px;width:26px">H</div>
<div class="a c" style="left:26px;width:45px">Kimenő</div>
<div class="a c" style="left:71px;width:51px;letter-spacing:-0.4px">Normál</div>
<div class="a c" style="left:122px;width:98px">56-SZLA-AT/2008</div>
<div class="a c" style="left:220px;width:71px">1006</div>
<div class="a c" style="left:291px;width:111px;letter-spacing:-0.2px">Szabó Kázmér</div>
<div class="a c" style="left:402px;width:64px;letter-spacing:-0.2px">2008-04-07</div>
<div class="a c" style="left:466px;width:64px;letter-spacing:-0.2px">2008-04-07</div>
<div class="a c" style="left:530px;width:65px;letter-spacing:-0.2px">2008-04-17</div>
<div class="a c r" style="left:595px;width:69px">5 800</div>
<div class="a c r" style="left:664px;width:62px">1 160</div>
<div class="a c r" style="left:726px;width:71px">6 960</div>
<div class="a c r" style="left:797px;width:104px">0</div>
<div class="a c" style="left:901px;width:59px">HUF</div>
<div class="a c" style="left:960px;width:72px"></div>
<div class="a c" style="left:1032px;width:57px"></div>
<div class="a c" style="left:1089px;width:82px;letter-spacing:-0.15px">291-VMS/2008</div>
<div class="a c" style="left:1171px;width:50px"></div>
</div>
</div>
<div class="a dith" style="left:1251px;top:0;width:15px;height:214px"></div>
<div class="a sb" style="left:1251px;top:0;width:15px;height:15px"><svg class="a" style="left:3px;top:4px" width="7" height="4"><path d="M0 4h7L3.5 0z" fill="#000"/></svg></div>
<div class="a sb" style="left:1251px;top:15px;width:15px;height:44px"></div>
<div class="a sb" style="left:1251px;top:199px;width:15px;height:15px"><svg class="a" style="left:3px;top:5px" width="7" height="4"><path d="M0 0h7L3.5 4z" fill="#000"/></svg></div>
<div class="a dith" style="left:0;top:214px;width:1251px;height:15px"></div>
<div class="a sb" style="left:0;top:214px;width:15px;height:15px"><svg class="a" style="left:4px;top:3px" width="4" height="7"><path d="M4 0v7L0 3.5z" fill="#000"/></svg></div>
<div class="a sb" style="left:15px;top:214px;width:324px;height:15px"></div>
<div class="a sb" style="left:1236px;top:214px;width:15px;height:15px"><svg class="a" style="left:5px;top:3px" width="4" height="7"><path d="M0 0v7L4 3.5z" fill="#000"/></svg></div>
<div class="a" style="left:1251px;top:214px;width:16px;height:15px;background:#aea8d9"></div>
</div>
<div class="a btn" style="left:361px;top:354px;width:180px;height:24px;line-height:21px;letter-spacing:-0.13px">Pénzmozgás böngésző - vállalatok</div>
<div class="a btn" style="left:719px;top:354px;width:199px;height:24px;line-height:21px;letter-spacing:-0.18px">Pénzmozgás tétel böngésző - vállalatok</div>
<div class="a" style="left:5px;top:381px;width:1270px;height:2px;background:#dcd9f0"></div>
<div class="a" style="left:5px;top:383px;width:1270px;height:2px;background:#0c0838"></div>
<div class="t u" style="left:6px;top:386px;letter-spacing:-0.35px">Számla tétel</div>
<div class="a" style="left:6px;top:400px;width:1269px;height:284px;border-width:1px 2px 2px 1px;border-style:solid;border-color:#0c0838;border-right-color:#dcd9f0;border-bottom-color:#dcd9f0;background:#fff;overflow:hidden">
<div class="a" style="left:0;top:0;width:30px;height:266px;background:#aea8d9;border-right:1px solid #aea8d9"></div>
<div class="a hc" style="left:0;width:31px;height:34px;border-color:#aea8d9 #aea8d9 #0c0838 #aea8d9;border-right-width:0"></div>
<div class="a hc" style="left:30px;width:23px;height:34px;line-height:31px;padding-top:0">#</div>
<div class="a hc" style="left:53px;width:53px;height:34px;line-height:31px;padding-top:0">Áru kód</div>
<div class="a hc" style="left:106px;width:53px;height:34px;line-height:31px;padding-top:0">Áru név</div>
<div class="a hc" style="left:159px;width:40px;height:34px;line-height:31px;padding-top:0">ETK</div>
<div class="a hc" style="left:199px;width:92px;height:34px;line-height:31px;padding-top:0">Áru jegyzék kód</div>
<div class="a hc" style="left:291px;width:71px;height:34px;line-height:31px;padding-top:0">Áru jegyzék</div>
<div class="a hc" style="left:362px;width:37px;height:34px;line-height:31px;padding-top:0">M.e.</div>
<div class="a hc" style="left:399px;width:60px;height:34px;line-height:31px;padding-top:0">Egységár</div>
<div class="a hc" style="left:459px;width:67px;height:34px;line-height:31px;padding-top:0">Mennyiség</div>
<div class="a hc" style="left:526px;width:69px;height:34px;line-height:31px;padding-top:0">Nettó érték</div>
<div class="a hc" style="left:595px;width:63px;height:34px;line-height:31px;padding-top:0">Adó kulcs</div>
<div class="a hc" style="left:658px;width:62px;height:34px;line-height:31px;padding-top:0">Adó érték</div>
<div class="a hc" style="left:720px;width:71px;height:34px;line-height:31px;padding-top:0">Bruttó érték</div>
<div class="a hc" style="left:791px;width:98px;height:34px;line-height:31px;padding-top:0">Tétel megjegyzés</div>
<div class="a hc" style="left:889px;width:77px;height:34px;line-height:31px;padding-top:0">Megnevezés</div>
<div class="a hc" style="left:966px;width:59px;height:34px;line-height:13px;padding-top:3px">Alap<br>egységár</div>
<div class="a hc" style="left:1025px;width:36px;height:34px;line-height:31px;padding-top:0">Név</div>
<div class="a hc" style="left:1061px;width:65px;height:34px;line-height:31px;padding-top:0">Rövid kód</div>
<div class="a hc" style="left:1126px;width:66px;height:34px;line-height:13px;padding-top:3px">Ingyenes<br>mennyiség</div>
<div class="a hc" style="left:1192px;width:72px;height:34px;line-height:31px;padding-top:0">Megjegyzés</div>
<div class="a rh" style="top:34px;font-weight:bold;border-color:#0c0838 #dcd9f0 #dcd9f0 #0c0838">1</div>
<div class="a row" style="top:34px;width:1236px;background:#ffffcc">
<div class="a c r" style="left:0px;width:23px;border-right-color:#ecebc6">1</div>
<div class="a c" style="left:23px;width:53px;border-right-color:#ecebc6">60002</div>
<div class="a c" style="left:76px;width:53px;border-right-color:#ecebc6">Kolbász</div>
<div class="a c r" style="left:129px;width:40px;border-right-color:#ecebc6">60003</div>
<div class="a c" style="left:169px;width:92px;border-right-color:#ecebc6">A</div>
<div class="a c" style="left:261px;width:71px;border-right-color:#ecebc6">Általános</div>
<div class="a c" style="left:332px;width:37px;border-right-color:#ecebc6">DB</div>
<div class="a c r" style="left:369px;width:60px;border-right-color:#ecebc6">400</div>
<div class="a c r" style="left:429px;width:67px;border-right-color:#ecebc6">10</div>
<div class="a c r" style="left:496px;width:69px;border-right-color:#ecebc6">4 000</div>
<div class="a c" style="left:565px;width:63px;border-right-color:#ecebc6">20</div>
<div class="a c r" style="left:628px;width:62px;border-right-color:#ecebc6">800</div>
<div class="a c r" style="left:690px;width:71px;border-right-color:#ecebc6">4 800</div>
<div class="a c" style="left:761px;width:98px;border-right-color:#ecebc6"></div>
<div class="a c" style="left:859px;width:77px;border-right-color:#ecebc6"></div>
<div class="a c r" style="left:936px;width:59px;border-right-color:#ecebc6">400</div>
<div class="a c" style="left:995px;width:36px;border-right-color:#ecebc6"></div>
<div class="a c" style="left:1031px;width:65px;border-right-color:#ecebc6"></div>
<div class="a c" style="left:1096px;width:66px;border-right-color:#ecebc6"></div>
<div class="a c" style="left:1162px;width:72px;border-right-color:#ecebc6"></div>
</div>
<div class="a dith" style="left:0;top:266px;width:1266px;height:15px"></div>
<div class="a sb" style="left:0;top:266px;width:15px;height:15px"><svg class="a" style="left:4px;top:3px" width="4" height="7"><path d="M4 0v7L0 3.5z" fill="#000"/></svg></div>
<div class="a sb" style="left:15px;top:266px;width:770px;height:15px"></div>
<div class="a sb" style="left:1251px;top:266px;width:15px;height:15px"><svg class="a" style="left:5px;top:3px" width="4" height="7"><path d="M0 0v7L4 3.5z" fill="#000"/></svg></div>
</div>
<div class="a" style="left:5px;top:690px;width:1270px;height:77px;border:1px solid #5a4eb1;box-shadow:1px 1px 0 #dcd9f0, inset 1px 1px 0 #dcd9f0"></div>
<div class="t" style="left:12px;top:685px;background:#aea8d9;padding:0 2px;letter-spacing:-0.2px">Összesített értékek pénznemenként</div>
<div class="t r" style="left:246px;width:200px;top:703px;letter-spacing:-0.3px">Összes nettó érték</div>
<div class="t r" style="left:656px;width:200px;top:703px;letter-spacing:-0.3px">Összes adó érték</div>
<div class="t r" style="left:1064px;width:200px;top:703px;letter-spacing:-0.3px">Összes bruttó érték</div>
<div class="t" style="left:16px;top:721px">HUF</div>
<div class="a sunk" style="left:39px;top:718px;width:408px;height:19px"><div class="t r" style="right:2px;top:2px">1212425</div></div>
<div class="a sunk" style="left:448px;top:718px;width:408px;height:19px"><div class="t r" style="right:2px;top:2px">242485</div></div>
<div class="a sunk" style="left:857px;top:718px;width:406px;height:19px"><div class="t r" style="right:2px;top:2px">1454910</div></div>
<div class="t" style="left:16px;top:741px">EUR</div>
<div class="a sunk" style="left:39px;top:738px;width:408px;height:19px"><div class="t r" style="right:2px;top:2px">18</div></div>
<div class="a sunk" style="left:448px;top:738px;width:408px;height:19px"><div class="t r" style="right:2px;top:2px">3.6</div></div>
<div class="a sunk" style="left:857px;top:738px;width:406px;height:19px"><div class="t r" style="right:2px;top:2px">21.6</div></div>
<div class="a" style="left:4px;top:773px;width:86px;height:16px;border:1px solid;border-color:#5a4eb1 #dcd9f0 #dcd9f0 #5a4eb1;font-family:'DejaVu Sans','Liberation Sans',sans-serif;font-stretch:condensed;font-size:11px;line-height:14px;padding-left:1px;letter-spacing:-0.1px;white-space:pre">-v1.96.1 ar857 H</div>
<div class="a" style="left:92px;top:773px;width:123px;height:16px;border:1px solid;border-color:#5a4eb1 #dcd9f0 #dcd9f0 #5a4eb1;font-family:'DejaVu Sans','Liberation Sans',sans-serif;font-stretch:condensed;font-size:11px;line-height:14px;padding-left:1px;letter-spacing:-0.1px;white-space:pre">1 / 40 (+)</div>
<div class="a" style="left:217px;top:773px;width:23px;height:16px;border:1px solid;border-color:#5a4eb1 #dcd9f0 #dcd9f0 #5a4eb1;font-family:'DejaVu Sans','Liberation Sans',sans-serif;font-stretch:condensed;font-size:11px;line-height:14px;padding-left:1px;letter-spacing:-0.1px;white-space:pre"><div class="a" style="left:2px;top:2px;width:10px;height:10px;border-radius:50%;background:#fff;border:1px solid;border-color:#0c0838 #dcd9f0 #dcd9f0 #0c0838"></div></div>
<div class="a" style="left:241px;top:773px;width:1020px;height:16px;border:1px solid;border-color:#5a4eb1 #dcd9f0 #dcd9f0 #5a4eb1;font-family:'DejaVu Sans','Liberation Sans',sans-serif;font-stretch:condensed;font-size:11px;line-height:14px;padding-left:1px;letter-spacing:-0.1px;white-space:pre">(*)[Vállalat]-&gt;A vállalat egyedi kódja</div>
<svg class="a" style="left:1264px;top:777px" width="14" height="13" viewBox="0 0 14 13"><path d="M1 13L14 0M5 13L14 4M9 13L14 8" stroke="#dcd9f0" stroke-width="1.4"/><path d="M2.4 13L14 1.4M6.4 13L14 5.4M10.4 13L14 9.4" stroke="#5a4eb1" stroke-width="1"/></svg>
<div class="a" style="left:0;top:790px;width:1280px;height:2px;background:#0c0838"></div>
<div class="a" style="left:0;top:795px;width:1280px;height:1px;background:#dcd9f0"></div>
<div class="a" style="left:0;top:53px;width:2px;height:737px;background:#dcd9f0"></div>
<div class="a" style="left:1278px;top:76px;width:2px;height:715px;background:#0c0838"></div>
</body></html>
